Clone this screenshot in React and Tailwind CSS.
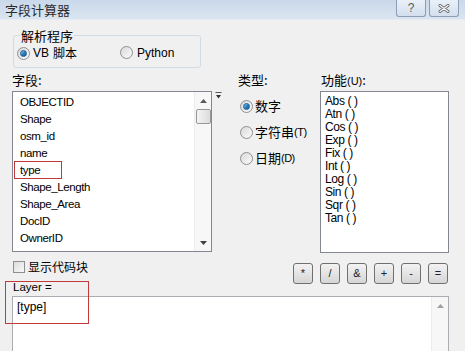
import React from "react";

const CJK = { fontFamily: '"Noto Sans CJK SC", "Liberation Sans", sans-serif' };

const FIELDS = [
  "OBJECTID",
  "Shape",
  "osm_id",
  "name",
  "type",
  "Shape_Length",
  "Shape_Area",
  "DocID",
  "OwnerID",
];

const FUNCS = ["Abs ( )", "Atn ( )", "Cos ( )", "Exp ( )", "Fix ( )", "Int ( )", "Log ( )", "Sin ( )", "Sqr ( )", "Tan ( )"];

const OPS = ["*", "/", "&", "+", "-", "="];

// ─── Win7 style radio ───────────────────────────────────
const Radio = ({ checked }) => (
  <span className="relative inline-flex w-[13px] h-[13px] shrink-0 rounded-full border border-[#8f8f8f] bg-gradient-to-br from-[#d9d9d9] to-[#fbfbfb] items-center justify-center">
    {checked && (
      <span className="w-[7px] h-[7px] rounded-full bg-gradient-to-br from-[#8fd0f5] via-[#2a7fc0] to-[#1b5d99] border border-[#1d5f8f]" />
    )}
  </span>
);

const UpArrow = () => (
  <svg width="7" height="4" viewBox="0 0 7 4">
    <path d="M0 4 L3.5 0 L7 4 Z" fill="#5a5a5a" />
  </svg>
);

const DownArrow = () => (
  <svg width="7" height="4" viewBox="0 0 7 4">
    <path d="M0 0 L7 0 L3.5 4 Z" fill="#404040" />
  </svg>
);

export default function App() {
  return (
    <div className="relative w-[465px] h-[351px] overflow-hidden bg-[#f0f0f0] text-black">
      {/* Title bar */}
      <div className="h-[20px] flex items-start justify-between bg-gradient-to-b from-[#c9d8ea] to-[#dbe5f1] border-b border-[#e4ebf3]">
        <span className="pl-[5px] pt-[1px] text-[13px] leading-[17px] text-[#2b2b2b]" style={CJK}>
          字段计算器
        </span>
        <div className="flex gap-[3px] pr-[6px]">
          <div className="w-[30px] h-[17px] rounded-b-[3px] border border-t-0 border-[#8d9db3] bg-gradient-to-b from-[#e9f0f8] to-[#d3dfee] flex items-center justify-center">
            <span className="text-[12px] leading-none text-[#5b5b5b] font-['Liberation_Sans',sans-serif]">?</span>
          </div>
          <div className="w-[30px] h-[17px] rounded-b-[3px] border border-t-0 border-[#8d9db3] bg-gradient-to-b from-[#e9f0f8] to-[#d3dfee] flex items-center justify-center">
            <svg width="12" height="9" viewBox="0 0 12 9">
              <path d="M2 1.5 L10 7.5 M10 1.5 L2 7.5" stroke="#6b6b6b" strokeWidth="3" strokeLinecap="round" />
              <path d="M2 1.5 L10 7.5 M10 1.5 L2 7.5" stroke="#f4f6f9" strokeWidth="1.3" strokeLinecap="round" />
            </svg>
          </div>
        </div>
      </div>

      {/* Parser group */}
      <fieldset className="mt-[8px] ml-[13px] w-[188px] border border-[#d3dbe2] rounded-[3px] pb-[6px]">
        <legend className="ml-[6px] px-[1px] text-[13px] leading-[15px]" style={CJK}>
          解析程序
        </legend>
        <div className="flex items-center h-[16px] mt-[2px] pl-[3px]">
          <Radio checked />
          <span className="ml-[3px] text-[12px] font-['Liberation_Sans',sans-serif]">VB</span>
          <span className="ml-[4px] text-[12px] leading-[16px]" style={CJK}>脚本</span>
          <span className="ml-[43px]"><Radio /></span>
          <span className="ml-[4px] text-[12px] font-['Liberation_Sans',sans-serif]">Python</span>
        </div>
      </fieldset>

      {/* Columns */}
      <div className="flex mt-[4px]">
        {/* Fields */}
        <div className="ml-[12px] w-[200px]">
          <div className="h-[16px] leading-[16px] text-[13px] mb-[3px]" style={CJK}>字段:</div>
          <div className="h-[161px] border border-[#828790] bg-white flex">
            <div className="flex-1 pt-[2px] pl-[7px] font-['Liberation_Sans',sans-serif] text-[11.5px] tracking-[-0.4px]">
              {FIELDS.map((f) => (
                <div key={f} className="h-[17px] leading-[17px]">{f}</div>
              ))}
            </div>
            <div className="w-[17px] flex flex-col items-center bg-[#f7f7f7] border-l border-[#ececec]">
              <div className="h-[17px] flex items-center justify-center"><UpArrow /></div>
              <div className="w-[15px] h-[15px] rounded-[2px] border border-[#979797] bg-gradient-to-r from-[#f4f4f4] to-[#dcdcdc]" />
              <div className="flex-1" />
              <div className="h-[17px] flex items-center justify-center"><DownArrow /></div>
            </div>
          </div>
        </div>

        {/* Sort glyph */}
        <div className="ml-[3px] w-[23px] pt-[20px]">
          <svg width="7" height="8" viewBox="0 0 7 8">
            <path d="M0.5 0.5 H6.5" stroke="#555" strokeWidth="1" />
            <path d="M1 3 L6 3 L3.5 6.5 Z" fill="#333" />
          </svg>
        </div>

        {/* Type */}
        <div className="w-[82px]">
          <div className="h-[16px] leading-[16px] text-[13px] mb-[3px]" style={CJK}>类型:</div>
          <div className="pt-[2px] pl-[2px]">
            {[
              ["数字", "", true],
              ["字符串", "(T)", false],
              ["日期", "(D)", false],
            ].map(([t, k, c]) => (
              <div key={t} className="h-[26px] flex items-center">
                <Radio checked={c} />
                <span className="ml-[2px] text-[13px]" style={CJK}>{t}</span>
                {k && <span className="text-[11px] tracking-[-0.5px] font-['Liberation_Sans',sans-serif]">{k}</span>}
              </div>
            ))}
          </div>
        </div>

        {/* Functions */}
        <div className="w-[129px]">
          <div className="h-[16px] leading-[16px] text-[13px] mb-[3px] pl-[1px]" style={CJK}>
            功能<span className="text-[11px] font-['Liberation_Sans',sans-serif]">(U)</span>:
          </div>
          <div className="h-[162px] border border-[#828790] bg-white pt-[3px] pl-[4px] font-['Liberation_Sans',sans-serif] text-[12px] tracking-[-0.4px]">
            {FUNCS.map((f) => (
              <div key={f} className="h-[13px] leading-[13px]">{f}</div>
            ))}
          </div>
        </div>
      </div>

      {/* Bottom section */}
      <div className="flex mt-[7px] pr-[17px]">
        <div className="ml-[13px] flex-1">
          <div className="h-[14px] flex items-center">
            <span className="w-[12px] h-[12px] border border-[#8f8f8f] bg-gradient-to-br from-[#dcdcdc] to-[#fafafa]" />
            <span className="ml-[3px] text-[12px] leading-[14px]" style={CJK}>显示代码块</span>
          </div>
          <div className="mt-[6px] h-[14px] leading-[14px] text-[11.5px] font-['Liberation_Sans',sans-serif]">Layer =</div>
        </div>
        <div className="flex gap-[7px] mt-[3px] self-start">
          {OPS.map((o) => (
            <div
              key={o}
              className="w-[20px] h-[21px] rounded-[3px] border border-[#707070] bg-gradient-to-b from-[#f2f2f2] to-[#d6d6d6] flex items-center justify-center text-[11px] font-['Liberation_Sans',sans-serif] text-[#222]"
            >
              {o}
            </div>
          ))}
        </div>
      </div>

      {/* Expression box */}
      <div className="mt-[2px] ml-[12px] w-[437px] h-[70px] border border-[#abadb3] bg-white flex">
        <div className="flex-1 pl-[4px] pt-[2px] text-[12px] leading-[16px] font-['Liberation_Sans',sans-serif]">[type]</div>
        <div className="w-[17px] bg-[#f7f7f7] border-l border-[#ececec] flex justify-center pt-[7px]">
          <svg width="7" height="4" viewBox="0 0 7 4">
            <path d="M0 4 L3.5 0 L7 4 Z" fill="#a0a0a0" />
          </svg>
        </div>
      </div>

      {/* Red annotation boxes */}
      <div className="absolute left-[14px] top-[161px] w-[48px] h-[18px] border border-[#c0393b]" />
      <div className="absolute left-[5px] top-[281px] w-[84px] h-[43px] border border-[#c0393b]" />
    </div>
  );
}
